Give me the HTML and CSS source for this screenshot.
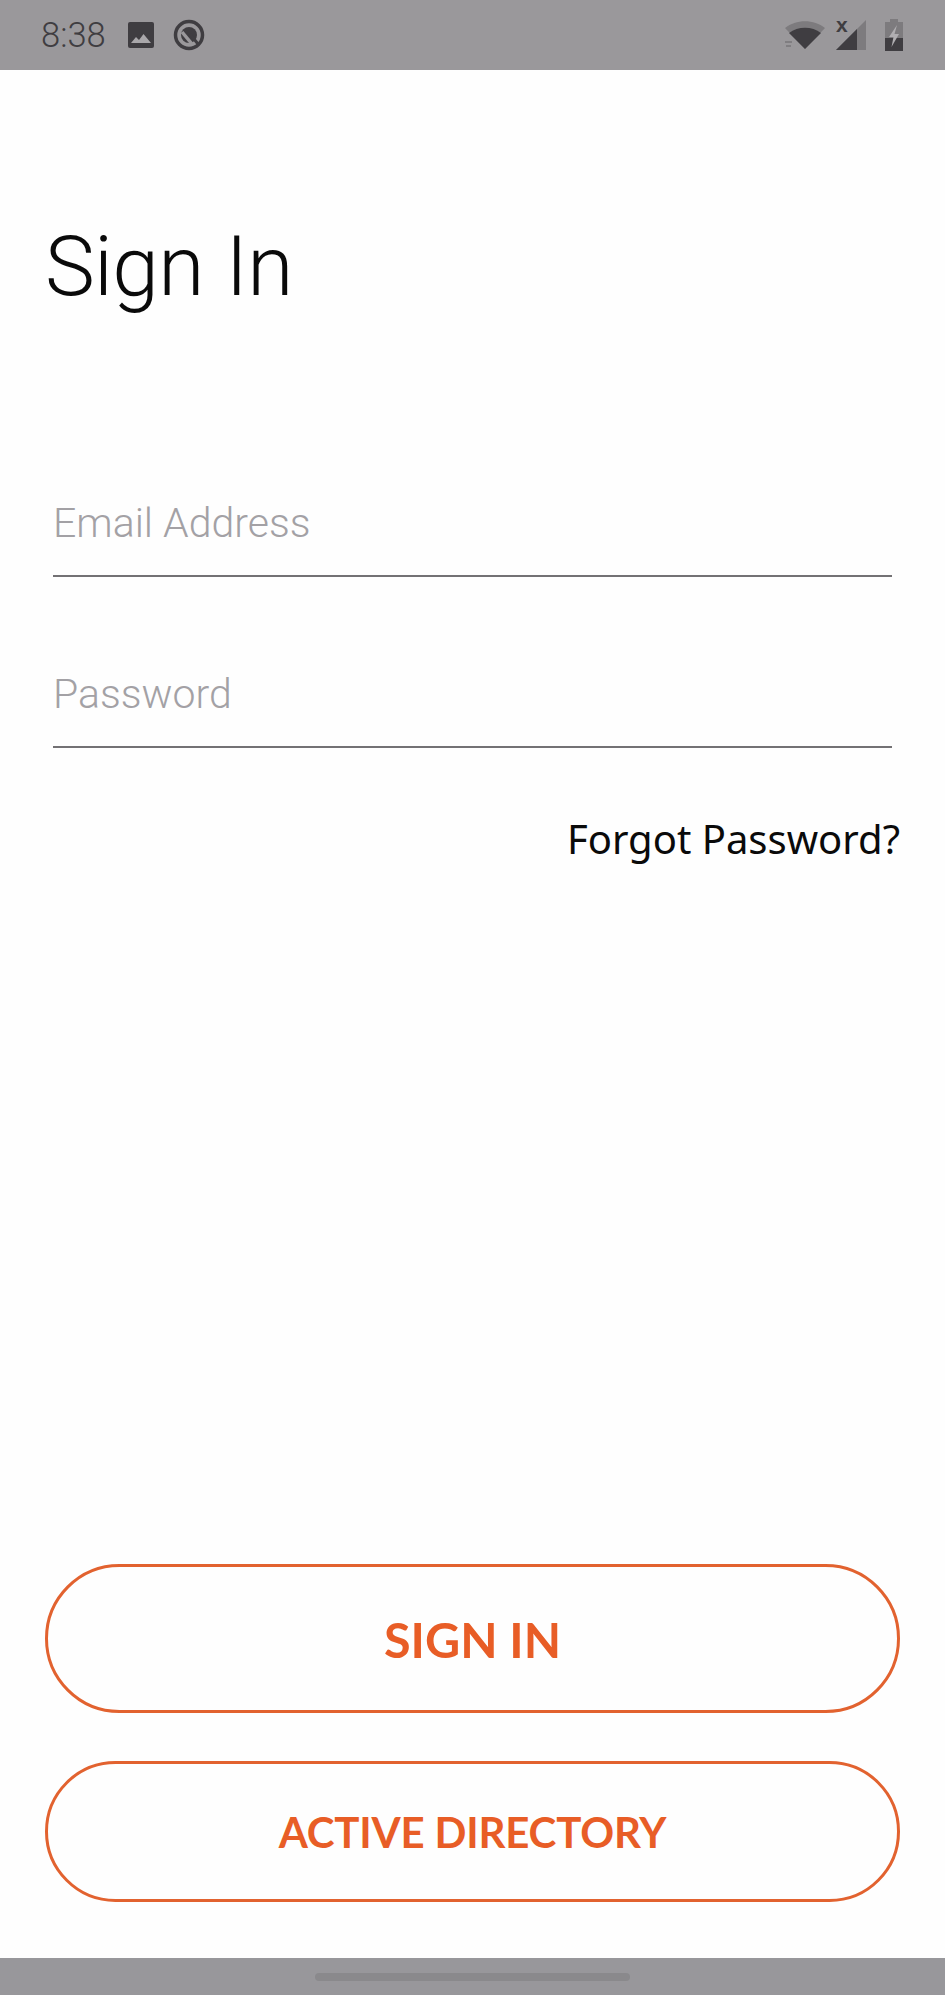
FILE: index.html
```html
<!DOCTYPE html>
<html lang="en">
<head>
    <meta charset="UTF-8">
    <meta name="viewport" content="width=device-width, initial-scale=1.0">
    <title>Sign In</title>
    <link rel="stylesheet" href="styles.css">
</head>
<body>
    <div class="screen">
        <!-- Status Bar -->
        <div class="status-bar">
            <div class="status-left">
                <span class="status-time">8:38</span>
                <svg class="icon-image" width="26" height="26" viewBox="0 0 26 26">
                    <rect x="0" y="0" width="26" height="26" rx="2" fill="#3f3d41"/>
                    <path d="M3 21 L8 15 L11 18 L15.500 12 L23 21 Z" fill="#a9a7aa"/>
                </svg>
                <svg class="icon-q" width="32" height="32" viewBox="0 0 32 32">
                    <circle cx="16" cy="16" r="13.500" fill="none" stroke="#3f3d41" stroke-width="3.500"/>
                    <circle cx="16" cy="16" r="8" fill="#3f3d41"/>
                    <path d="M9 13 L19 25" stroke="#9a989b" stroke-width="3.500" fill="none"/>
                    <path d="M17 15 L25 25" stroke="#3f3d41" stroke-width="3" fill="none"/>
                </svg>
            </div>
            <div class="status-right">
                <svg class="icon-wifi" width="42" height="30" viewBox="0 0 42 30">
                    <path d="M1 8 C12 -1 30 -1 41 8 L21 29 Z" fill="#7d7b7e"/>
                    <path d="M5 13 C14 6 28 6 37 13 L21 29 Z" fill="#3f3d41"/>
                    <path d="M1 22 H8 M2 26 H7" stroke="#807e81" stroke-width="2" fill="none"/>
                </svg>
                <span class="signal">
                    <span class="signal-x">x</span>
                    <svg width="32" height="32" viewBox="0 0 32 32">
                        <path d="M31 1 L31 31 L1 31 Z" fill="#7d7b7e"/>
                        <path d="M22 10 L22 31 L1 31 Z" fill="#3f3d41"/>
                    </svg>
                </span>
                <svg class="icon-battery" width="20" height="33" viewBox="0 0 20 33">
                    <path d="M6 0 H14 V3 H19 V32 H1 V3 H6 Z" fill="#7d7b7e"/>
                    <rect x="1" y="19" width="18" height="13" fill="#3f3d41"/>
                    <path d="M13 6 L5 18 H9.500 L7.500 28 L15 15 H10.500 Z" fill="#b0aeb1"/>
                </svg>
            </div>
        </div>

        <!-- Sign In Form -->
        <div class="content">
            <h1 class="title">Sign In</h1>
            <div class="field field-email">Email Address</div>
            <div class="field field-password">Password</div>
            <div class="forgot">Forgot Password?</div>

            <div class="buttons">
                <div class="btn btn-sign-in">SIGN IN</div>
                <div class="btn btn-directory">ACTIVE DIRECTORY</div>
            </div>
        </div>

        <!-- Navigation Bar -->
        <div class="nav-bar">
            <div class="nav-pill"></div>
        </div>
    </div>
</body>
</html>
```

FILE: styles.css
```css
/* General Styles */
html, body {
    margin: 0;
    padding: 0;
}

body {
    background-color: #fefefe;
    font-family: "Liberation Sans", Arial, sans-serif;
}

.screen {
    width: 945px;
    height: 1995px;
    display: flex;
    flex-direction: column;
    overflow: hidden;
}

/* Status Bar */
.status-bar {
    height: 70px;
    flex-shrink: 0;
    background-color: #9a989b;
    display: flex;
    justify-content: space-between;
    align-items: center;
    padding: 0 41px 0 41px;
    box-sizing: border-box;
}

.status-left,
.status-right {
    display: flex;
    align-items: center;
}

.status-time {
    font-family: Roboto, sans-serif;
    font-weight: 300;
    font-size: 34.500px;
    color: #3f3d41;
    width: 87px;
}

.icon-q {
    margin-left: 19px;
}

.signal {
    position: relative;
    display: block;
    height: 32px;
    margin-left: 9px;
}

.signal svg {
    display: block;
}

.signal-x {
    position: absolute;
    left: 1px;
    top: -5px;
    font-size: 21px;
    line-height: 21px;
    font-weight: bold;
    color: #3f3d41;
}

.icon-battery {
    margin-left: 17px;
}

/* Form */
.content {
    flex: 1;
    display: flex;
    flex-direction: column;
    padding: 0 45px;
}

.title {
    margin: 147px 0 0;
    font-family: Roboto, sans-serif;
    font-weight: 300;
    font-size: 84px;
    line-height: 100px;
    letter-spacing: -0.700px;
    word-spacing: 2px;
    color: #0a0a0a;
}

.field {
    margin: 0 8px;
    border-bottom: 2px solid #737174;
    font-size: 41px;
    font-family: Roboto, sans-serif;
    font-weight: 300;
    color: #a3a1a5;
    line-height: 50px;
    padding-bottom: 27px;
}

.field-email {
    margin-top: 181px;
}

.field-password {
    margin-top: 92px;
}

.forgot {
    margin-top: 63px;
    text-align: right;
    font-family: "Noto Sans", sans-serif;
    font-size: 40px;
    line-height: 56px;
    color: #0a0a0a;
}

/* Buttons */
.buttons {
    margin-top: auto;
    padding-bottom: 56px;
    display: flex;
    flex-direction: column;
    gap: 48px;
}

.btn {
    border: 3px solid #e2622f;
    border-radius: 80px;
    box-sizing: border-box;
    display: flex;
    align-items: center;
    justify-content: center;
    font-family: Lato, sans-serif;
    font-weight: 700;
    color: #e85d26;
}

.btn-sign-in {
    height: 149px;
    font-size: 48.500px;
    padding-top: 1px;
}

.btn-directory {
    height: 141px;
    font-size: 42px;
    letter-spacing: -0.200px;
    padding-top: 1px;
}

/* Navigation Bar */
.nav-bar {
    height: 37px;
    flex-shrink: 0;
    background-color: #98979b;
    display: flex;
    justify-content: center;
    padding-top: 15px;
    box-sizing: border-box;
}

.nav-pill {
    width: 315px;
    height: 8px;
    border-radius: 4px;
    background-color: #8a898c;
}
```
